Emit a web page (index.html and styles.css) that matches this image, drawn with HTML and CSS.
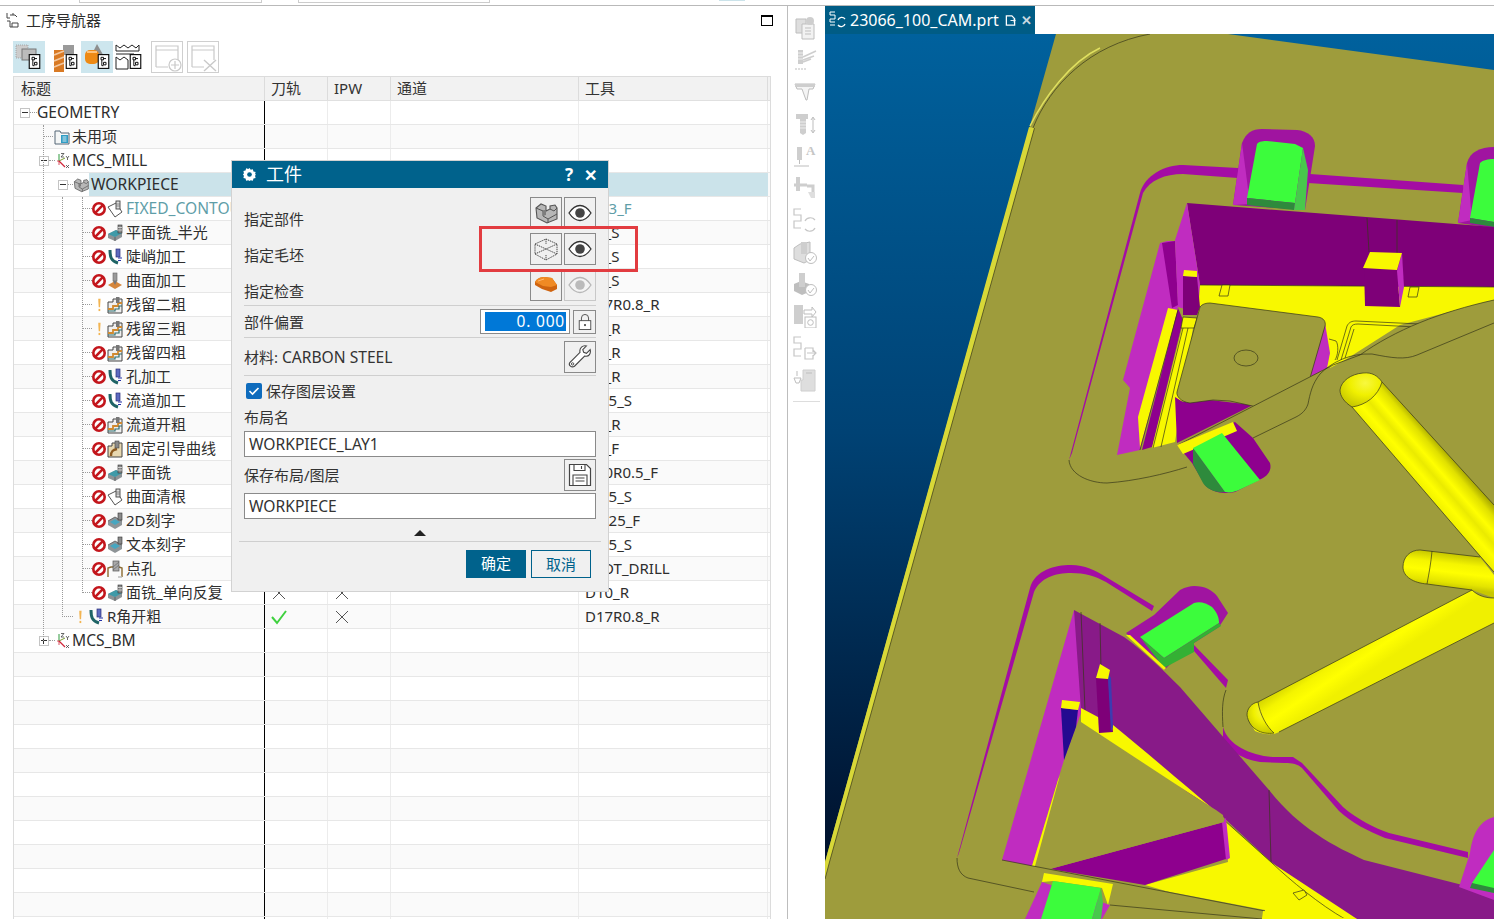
FILE: index.html
```html
<!DOCTYPE html>
<html lang="zh-CN">
<head>
<meta charset="utf-8">
<title>工序导航器</title>
<link rel="stylesheet" href="styles.css">
</head>
<body>
<svg class="defs" width="0" height="0" aria-hidden="true">
  <defs>
    <symbol id="no" viewBox="0 0 14 14"><circle cx="7" cy="7" r="5.7" fill="#fff" stroke="#c3161c" stroke-width="2.6"/><path d="M3.200 10.800 10.800 3.200" stroke="#c3161c" stroke-width="2.600"/></symbol>
    <symbol id="warn" viewBox="0 0 14 18"><path d="M6 1h3L8.400 12H6.600z" fill="#f2b451"/><rect x="6.400" y="14" width="2.200" height="2.800" fill="#f2b451"/></symbol>
    <symbol id="i-fixed" viewBox="0 0 16 18"><path d="M1 7 9 3l6 9-7 5z" fill="#fff" stroke="#555" stroke-width="1"/><rect x="9" y="1" width="4" height="8" fill="#ddd" stroke="#444" stroke-width=".9"/><path d="M9 4h4M9 6h4" stroke="#666" stroke-width=".7"/></symbol>
    <symbol id="i-face" viewBox="0 0 16 18"><path d="M1 10 9 6l6 3v4l-7 4-7-3z" fill="#8d9396"/><path d="M1 10 9 6l6 3-7 4z" fill="#3f9aa8"/><path d="M8 13v4" stroke="#555" stroke-width=".8"/><rect x="11" y="1" width="4" height="8" fill="#8a8a8a" stroke="#333" stroke-width=".6"/><path d="M11 3.500h4M11 6h4" stroke="#eee" stroke-width=".7"/></symbol>
    <symbol id="i-steep" viewBox="0 0 16 18"><path d="M3 2c0 7 1 11 8 13" fill="none" stroke="#1f6466" stroke-width="3"/><rect x="9" y="1" width="4" height="8" fill="#5d6bc0" stroke="#2b2f7a" stroke-width=".7"/><path d="M11 10h4M11 12.500h3" stroke="#2230a8" stroke-width="1.100"/></symbol>
    <symbol id="i-surf" viewBox="0 0 16 18"><rect x="6" y="1" width="4" height="8" fill="#9a9a9a" stroke="#666" stroke-width=".6"/><path d="M8 9 1 13l7 4 7-4z" fill="#d5863c"/><path d="M6 9h4l-2 4z" fill="#777"/></symbol>
    <symbol id="i-rest" viewBox="0 0 16 18"><path d="M1 6h5V3h9v14H1z" fill="#efefef" stroke="#444" stroke-width="1"/><path d="M1 13h5v-3h5V7h4" fill="none" stroke="#d08a30" stroke-width="1.800"/><path d="M1 15h7v-2h4v-3h3" fill="none" stroke="#2f6f70" stroke-width="1.200"/><rect x="9" y="1" width="3.500" height="6" fill="#777"/></symbol>
    <symbol id="i-guide" viewBox="0 0 16 18"><path d="M1 6h4V3h10v14H1z" fill="#e8d8b0" stroke="#444" stroke-width="1"/><path d="M4 16c0-5 2-6 6-7" fill="none" stroke="#8c5a20" stroke-width="2.400"/><rect x="8" y="1" width="4" height="7" fill="#8a8a8a" stroke="#444" stroke-width=".6"/></symbol>
    <symbol id="i-eng" viewBox="0 0 16 18"><path d="M1 9 8 5l7 4v4l-7 4-7-4z" fill="#8e9497"/><path d="M3 10 8 7.300l5 2.700-5 3z" fill="#46a6c0"/><path d="M1 9 8 5l7 4" fill="none" stroke="#555" stroke-width=".8"/><rect x="11" y="1" width="4" height="7" fill="#8a8a8a" stroke="#333" stroke-width=".6"/></symbol>
    <symbol id="i-drill" viewBox="0 0 16 18"><path d="M1 17V8l3-1h8l3 1v9" fill="none" stroke="#8a6a30" stroke-width="1.400"/><rect x="6" y="1" width="6" height="10" fill="#aaa" stroke="#555" stroke-width=".7"/><path d="M6 7l6-5M6 10l6-5" stroke="#666" stroke-width=".7"/><path d="M11 17h4" stroke="#bbb" stroke-width="1.500"/></symbol>
    <symbol id="i-mcs" viewBox="0 0 16 18"><path d="M3 9V2" stroke="#2f9a3c" stroke-width="1"/><path d="M3 9l6-3" stroke="#7a9a30" stroke-width="1"/><path d="M3 9l6 6" stroke="#d0263a" stroke-width="1.200"/><path d="M1 9l2 0 0 4" stroke="#d0263a" stroke-width=".8" fill="none"/><path d="M5 1.500h3L5 5h3M10 4l1.500 2 1.500-2M11.500 6v2M10 13l3 3M13 13l-3 3" fill="none" stroke="#444" stroke-width=".8"/></symbol>
    <symbol id="i-folder" viewBox="0 0 16 16"><path d="M1 2h5l1 2h8v11H1z" fill="#f4f6f6" stroke="#567" stroke-width="1"/><rect x="7" y="6" width="7" height="8" fill="#2f9cc4"/><path d="M8.500 8h4M8.500 10h4M8.500 12h4" stroke="#fff" stroke-width=".8"/></symbol>
    <symbol id="i-part" viewBox="0 0 24 24"><path d="M2 7 7 3l5 2v5l4-2V5l5-1 2 3v11l-10 4-10-5z" fill="#b7b7b7" stroke="#555" stroke-width="1.100"/><path d="M2 7l7 3v5l5 3v4M14 18l9-5M9 10l3 0M16 8l4 2 3-3" fill="none" stroke="#555" stroke-width="1"/><path d="M9 10l3-1v5l-3 1z" fill="#7d7d7d"/></symbol>
    <symbol id="i-eye" viewBox="0 0 24 24"><path d="M1 12C5 6 8.500 4.500 12 4.500S19 6 23 12c-4 6-7.500 7.500-11 7.500S5 18 1 12z" fill="#fff" stroke="#333" stroke-width="1.300"/><circle cx="12" cy="12" r="4.800" fill="#444"/></symbol>
    <symbol id="i-blank" viewBox="0 0 24 24"><path d="M12 2 23 7v10l-11 6L1 17V7zM1 7l11 5 11-5M1 17l11-5 11 5M12 2v5M12 18v5" fill="none" stroke="#444" stroke-width="1" stroke-dasharray="1.300 .8"/></symbol>
    <symbol id="i-check" viewBox="0 0 24 24"><path d="M1 9c2-4 6-5 10-5l7 1 5 7v4l-6 3-9-3-7-4z" fill="#cf6410"/><path d="M1 9l8 4 8 1 6-2-5-7-7-1C7 4 3 5 1 9z" fill="#f08a24"/><path d="M4 8l6-2" stroke="#ffb870" stroke-width="1"/></symbol>
    <symbol id="i-lock" viewBox="0 0 18 20"><rect x="2.500" y="8.500" width="13" height="10" fill="#fff" stroke="#444" stroke-width="1"/><path d="M5 8.500V5.500a4 4 0 0 1 8 0v3" fill="none" stroke="#444" stroke-width="1"/><circle cx="9" cy="13.500" r="1.200" fill="#444"/></symbol>
    <symbol id="i-wrench" viewBox="0 0 26 26"><path d="M24 5l-4 4-3-1-1-3 4-4c-4-1-8 2-7 7L2 19c-2 3 2 6 5 4L18 12c5 1 7-3 6-7z" fill="#fff" stroke="#444" stroke-width="1.200"/><circle cx="5" cy="20.500" r="1.300" fill="none" stroke="#444"/></symbol>
    <symbol id="i-save" viewBox="0 0 24 24"><path d="M1.500 1.500h17l4 4v17h-21z" fill="#fff" stroke="#444" stroke-width="1.200"/><path d="M6 1.500v6h11v-6M13.500 3v3M5 22.500V12h14v10.500M7.500 15h9M7.500 18h9" fill="none" stroke="#444" stroke-width="1.100"/></symbol>
    <symbol id="i-badge" viewBox="0 0 14 18"><rect x=".7" y=".7" width="12.600" height="16.600" fill="#fff" stroke="#111" stroke-width="1.400"/><path d="M4 4h3v3H4zM5 7v7h2M7 10h3v3H7zM7 5.500h3" fill="none" stroke="#111" stroke-width="1.200"/></symbol>
    <symbol id="gear" viewBox="0 0 16 16"><path d="M8 1l1.300 2 2.300-.6.600 2.300 2.300.6-.6 2.300L15 8l-1.100 1.400.6 2.300-2.300.6-.6 2.300-2.300-.6L8 15l-1.300-1-2.300.6-.6-2.300-2.300-.6.600-2.300L1 8l1.100-1.400-.6-2.300 2.300-.6.600-2.300 2.300.6z" fill="#fff"/><circle cx="8" cy="8" r="2.500" fill="#00628c"/></symbol>
    <symbol id="x-mark" viewBox="0 0 16 16"><path d="M2 2 14 14M14 2 2 14" stroke="#555" stroke-width="1"/></symbol>
  </defs>
</svg>

<div class="app">
  <div class="topstrip">
    <span class="topbox topbox-a"></span>
    <span class="topbox topbox-b"></span>
    <span class="topbox topbox-c"></span>
  </div>
  <div class="main">
    <section class="left">
      <header class="ptitle">
        <svg class="ptitle-ic" viewBox="0 0 16 16"><path d="M1 1v5h3M4 3h3M7 1v2h2M1 9h3M4 9v6h8v-4H6v4" fill="none" stroke="#444" stroke-width="1"/><path d="M9 3l2 2" stroke="#444"/></svg>
        <span class="ptitle-t">工序导航器</span>
        <span class="maxbtn"></span>
      </header>
      <div class="ptools">
        <span class="pt on"><svg viewBox="0 0 32 32"><rect x="3" y="4" width="12" height="13" fill="#ccc" stroke="#888" stroke-width=".6" stroke-dasharray="1 1"/><rect x="9" y="8" width="14" height="11" fill="#bbb" stroke="#777"/><use href="#i-badge" x="15" y="13" width="13" height="15"/></svg></span>
        <span class="pt"><svg viewBox="0 0 32 32"><rect x="14" y="4" width="11" height="10" fill="#9a9a9a"/><path d="M5 9h10v22H5z" fill="#d97a24"/><path d="M5 14l10-4M5 20l10-4M5 26l10-4" stroke="#f3c8a0" stroke-width="1.800"/><use href="#i-badge" x="16" y="13" width="13" height="15"/></svg></span>
        <span class="pt on"><svg viewBox="0 0 32 32"><path d="M16 3l9 16-5 6-8-14z" fill="#8e8e8e"/><rect x="4" y="9" width="14" height="14" rx="5" fill="#ee8a14"/><path d="M6 11h10" stroke="#ffc27a" stroke-width="2"/><use href="#i-badge" x="16" y="13" width="13" height="15"/></svg></span>
        <span class="pt"><svg viewBox="0 0 32 32"><path d="M3 4l4 3 4-3 4 3 4-3 4 3 3-3v6H3zM3 16l4 3 4-3 4 3v9H3z" fill="#fff" stroke="#222" stroke-width="1"/><path d="M3 13h18" stroke="#222"/><use href="#i-badge" x="16" y="13" width="13" height="15"/></svg></span>
        <span class="pt off"><svg viewBox="0 0 32 32"><path d="M4 25V4h22v14M4 25h12M4 8h22" fill="none" stroke="#c9c9c9" stroke-width="1.200"/><circle cx="23" cy="23" r="6" fill="#fff" stroke="#c9c9c9" stroke-width="1.200"/><path d="M23 19v8M19 23h8" stroke="#c9c9c9" stroke-width="1.200"/></svg></span>
        <span class="pt off"><svg viewBox="0 0 32 32"><path d="M4 25V4h22v14M4 25h12M4 8h22" fill="none" stroke="#c9c9c9" stroke-width="1.200"/><path d="M16 18l12 11M28 18 16 29" stroke="#c9c9c9" stroke-width="1.400"/></svg></span>
      </div>

      <div class="table">
        <div class="thead">
          <div class="th th-title">标题</div>
          <div class="th th-a">刀轨</div>
          <div class="th th-a">IPW</div>
          <div class="th th-b">通道</div>
          <div class="th th-c">工具</div>
        </div>
        <div class="rows">
          <span class="vl vl1"></span><span class="vl vl2"></span><span class="vl vl3"></span>

          <div class="row"><div class="t p0"><i class="exp minus"></i><b class="stub s7"></b><span class="lat">GEOMETRY</span></div><div class="c a"></div><div class="c a"></div><div class="c b"></div><div class="c d"></div></div>
          <div class="row"><div class="t p1"><b class="stub s9"></b><svg class="ic"><use href="#i-folder"/></svg><span class="gap2">未用项</span></div><div class="c a"></div><div class="c a"></div><div class="c b"></div><div class="c d"></div></div>
          <div class="row"><div class="t p2"><i class="exp minus"></i><b class="stub s6"></b><svg class="ic"><use href="#i-mcs"/></svg><span class="lat">MCS_MILL</span></div><div class="c a"></div><div class="c a"></div><div class="c b"></div><div class="c d"></div></div>
          <div class="row sel"><div class="t p3"><i class="exp minus"></i><b class="stub s5"></b><svg class="ic"><use href="#i-part"/></svg><span class="lab lat">WORKPIECE</span></div><div class="c a"></div><div class="c a"></div><div class="c b"></div><div class="c d"></div></div>

          <div class="row"><div class="t p4"><b class="stub s9"></b><svg class="st"><use href="#no"/></svg><svg class="ic"><use href="#i-fixed"/></svg><span class="gap3 teal lat">FIXED_CONTOUR</span></div><div class="c a"></div><div class="c a"></div><div class="c b"></div><div class="c d teal">D6.3_F</div></div>
          <div class="row"><div class="t p4"><b class="stub s9"></b><svg class="st"><use href="#no"/></svg><svg class="ic"><use href="#i-face"/></svg><span class="gap3">平面铣_半光</span></div><div class="c a"></div><div class="c a"></div><div class="c b"></div><div class="c d">D8_S</div></div>
          <div class="row"><div class="t p4"><b class="stub s9"></b><svg class="st"><use href="#no"/></svg><svg class="ic"><use href="#i-steep"/></svg><span class="gap3">陡峭加工</span></div><div class="c a"></div><div class="c a"></div><div class="c b"></div><div class="c d">D8_S</div></div>
          <div class="row"><div class="t p4"><b class="stub s9"></b><svg class="st"><use href="#no"/></svg><svg class="ic"><use href="#i-surf"/></svg><span class="gap3">曲面加工</span></div><div class="c a"></div><div class="c a"></div><div class="c b"></div><div class="c d">D8_S</div></div>
          <div class="row"><div class="t p4"><b class="stub s9"></b><svg class="st"><use href="#warn"/></svg><svg class="ic"><use href="#i-rest"/></svg><span class="gap3">残留二粗</span></div><div class="c a"></div><div class="c a"></div><div class="c b"></div><div class="c d">D17R0.8_R</div></div>
          <div class="row"><div class="t p4"><b class="stub s9"></b><svg class="st"><use href="#warn"/></svg><svg class="ic"><use href="#i-rest"/></svg><span class="gap3">残留三粗</span></div><div class="c a"></div><div class="c a"></div><div class="c b"></div><div class="c d">D8_R</div></div>
          <div class="row"><div class="t p4"><b class="stub s9"></b><svg class="st"><use href="#no"/></svg><svg class="ic"><use href="#i-rest"/></svg><span class="gap3">残留四粗</span></div><div class="c a"></div><div class="c a"></div><div class="c b"></div><div class="c d">D8_R</div></div>
          <div class="row"><div class="t p4"><b class="stub s9"></b><svg class="st"><use href="#no"/></svg><svg class="ic"><use href="#i-steep"/></svg><span class="gap3">孔加工</span></div><div class="c a"></div><div class="c a"></div><div class="c b"></div><div class="c d">D8_R</div></div>
          <div class="row"><div class="t p4"><b class="stub s9"></b><svg class="st"><use href="#no"/></svg><svg class="ic"><use href="#i-steep"/></svg><span class="gap3">流道加工</span></div><div class="c a"></div><div class="c a"></div><div class="c b"></div><div class="c d">D2.5_S</div></div>
          <div class="row"><div class="t p4"><b class="stub s9"></b><svg class="st"><use href="#no"/></svg><svg class="ic"><use href="#i-rest"/></svg><span class="gap3">流道开粗</span></div><div class="c a"></div><div class="c a"></div><div class="c b"></div><div class="c d">D8_R</div></div>
          <div class="row"><div class="t p4"><b class="stub s9"></b><svg class="st"><use href="#no"/></svg><svg class="ic"><use href="#i-guide"/></svg><span class="gap3">固定引导曲线</span></div><div class="c a"></div><div class="c a"></div><div class="c b"></div><div class="c d">D8_F</div></div>
          <div class="row"><div class="t p4"><b class="stub s9"></b><svg class="st"><use href="#no"/></svg><svg class="ic"><use href="#i-face"/></svg><span class="gap3">平面铣</span></div><div class="c a"></div><div class="c a"></div><div class="c b"></div><div class="c d">D10R0.5_F</div></div>
          <div class="row"><div class="t p4"><b class="stub s9"></b><svg class="st"><use href="#no"/></svg><svg class="ic"><use href="#i-fixed"/></svg><span class="gap3">曲面清根</span></div><div class="c a"></div><div class="c a"></div><div class="c b"></div><div class="c d">D2.5_S</div></div>
          <div class="row"><div class="t p4"><b class="stub s9"></b><svg class="st"><use href="#no"/></svg><svg class="ic"><use href="#i-eng"/></svg><span class="gap3">2D刻字</span></div><div class="c a"></div><div class="c a"></div><div class="c b"></div><div class="c d">D1.25_F</div></div>
          <div class="row"><div class="t p4"><b class="stub s9"></b><svg class="st"><use href="#no"/></svg><svg class="ic"><use href="#i-eng"/></svg><span class="gap3">文本刻字</span></div><div class="c a"></div><div class="c a"></div><div class="c b"></div><div class="c d">D0.5_S</div></div>
          <div class="row"><div class="t p4"><b class="stub s9"></b><svg class="st"><use href="#no"/></svg><svg class="ic"><use href="#i-drill"/></svg><span class="gap3">点孔</span></div><div class="c a"></div><div class="c a"></div><div class="c b"></div><div class="c d">SPOT_DRILL</div></div>
          <div class="row"><div class="t p4"><b class="stub s9"></b><svg class="st"><use href="#no"/></svg><svg class="ic"><use href="#i-face"/></svg><span class="gap3">面铣_单向反复</span></div><div class="c a"><svg class="mark"><use href="#x-mark"/></svg></div><div class="c a"><svg class="mark"><use href="#x-mark"/></svg></div><div class="c b"></div><div class="c d">D10_R</div></div>
          <div class="row"><div class="t p5"><b class="stub s9"></b><svg class="st"><use href="#warn"/></svg><svg class="ic"><use href="#i-steep"/></svg><span class="gap3">R角开粗</span></div><div class="c a"><svg class="mark" viewBox="0 0 16 16"><path d="M1 8l5 6L15 2" fill="none" stroke="#3fd13f" stroke-width="2"/></svg></div><div class="c a"><svg class="mark"><use href="#x-mark"/></svg></div><div class="c b"></div><div class="c d">D17R0.8_R</div></div>
          <div class="row"><div class="t p2"><i class="exp plus"></i><b class="stub s6"></b><svg class="ic"><use href="#i-mcs"/></svg><span class="lat">MCS_BM</span></div><div class="c a"></div><div class="c a"></div><div class="c b"></div><div class="c d"></div></div>

          <div class="row"><div class="t"></div><div class="c a"></div><div class="c a"></div><div class="c b"></div><div class="c d"></div></div>
          <div class="row"><div class="t"></div><div class="c a"></div><div class="c a"></div><div class="c b"></div><div class="c d"></div></div>
          <div class="row"><div class="t"></div><div class="c a"></div><div class="c a"></div><div class="c b"></div><div class="c d"></div></div>
          <div class="row"><div class="t"></div><div class="c a"></div><div class="c a"></div><div class="c b"></div><div class="c d"></div></div>
          <div class="row"><div class="t"></div><div class="c a"></div><div class="c a"></div><div class="c b"></div><div class="c d"></div></div>
          <div class="row"><div class="t"></div><div class="c a"></div><div class="c a"></div><div class="c b"></div><div class="c d"></div></div>
          <div class="row"><div class="t"></div><div class="c a"></div><div class="c a"></div><div class="c b"></div><div class="c d"></div></div>
          <div class="row"><div class="t"></div><div class="c a"></div><div class="c a"></div><div class="c b"></div><div class="c d"></div></div>
          <div class="row"><div class="t"></div><div class="c a"></div><div class="c a"></div><div class="c b"></div><div class="c d"></div></div>
          <div class="row"><div class="t"></div><div class="c a"></div><div class="c a"></div><div class="c b"></div><div class="c d"></div></div>
          <div class="row"><div class="t"></div><div class="c a"></div><div class="c a"></div><div class="c b"></div><div class="c d"></div></div>
          <div class="row"><div class="t"></div><div class="c a"></div><div class="c a"></div><div class="c b"></div><div class="c d"></div></div>
        </div>
      </div>
    </section>

    <aside class="rtool">
      <svg class="ri" viewBox="0 0 24 24"><path d="M3 3h10v14H3z" fill="#ddd" stroke="#bbb"/><path d="M9 8h12v15H9z" fill="#f2f2f2" stroke="#bbb"/><path d="M12 12h6M12 15h6M12 18h6" stroke="#bbb"/><circle cx="17" cy="5" r="4" fill="#ccc"/></svg>
      <svg class="ri" viewBox="0 0 24 24"><rect x="5" y="2" width="5" height="14" fill="#ccc"/><path d="M5 5h5M5 8h5M5 11h5" stroke="#eee"/><path d="M10 9 23 3M10 12l11-4M10 14l8-3" stroke="#ccc" stroke-width="1.500"/><path d="M2 21h12" stroke="#ddd" stroke-width="2" stroke-dasharray="2 1"/></svg>
      <svg class="ri" viewBox="0 0 24 24"><path d="M2 4h20l-2 5h-4l-2 11h-1L9 9H4z" fill="#f4f4f4" stroke="#bbb"/><path d="M2 4h20v3H2z" fill="#ccc"/></svg>
      <svg class="ri" viewBox="0 0 24 24"><path d="M3 2h12v5h-2v14l-3 2-3-2V7H3z" fill="#ccc"/><path d="M7 10h6M7 13h6M7 16h6" stroke="#eee"/><path d="M20 6v14M18 8l2-3 2 3M18 18l2 3 2-3" fill="none" stroke="#bbb"/></svg>
      <svg class="ri" viewBox="0 0 24 24"><rect x="4" y="3" width="5" height="13" fill="#ccc"/><path d="M6.500 16v4" stroke="#bbb"/><path d="M1 21h15v2H1z" fill="#ddd"/><text class="rt" x="13" y="11">A</text></svg>
      <svg class="ri" viewBox="0 0 24 24"><rect x="3" y="1" width="4" height="14" fill="#ccc"/><path d="M1 9h13M14 10h6v12" fill="none" stroke="#ccc" stroke-width="3"/><path d="M15 16h7v6h-4" fill="#ddd"/></svg>
      <svg class="ri" viewBox="0 0 24 24"><path d="M8 1H1v6h7v6H1v7h7" fill="none" stroke="#c4c4c4" stroke-width="1.200"/><path d="M12 13a6 6 0 0 1 10-1M22 20a6 6 0 0 1-10 1" fill="none" stroke="#c4c4c4" stroke-width="1.200"/></svg>
      <svg class="ri" viewBox="0 0 24 24"><path d="M1 8l6-4 10-2v18l-6 3-10-4z" fill="#ddd" stroke="#bbb"/><rect x="8" y="2" width="6" height="12" fill="#ccc"/><circle cx="18" cy="18" r="5.500" fill="#fff" stroke="#bbb"/><path d="M15 18l2 3 4-5" fill="none" stroke="#bbb"/></svg>
      <svg class="ri" viewBox="0 0 24 24"><path d="M1 12l7-3 8 3v8l-7 3-8-4z" fill="#bbb"/><rect x="6" y="1" width="6" height="14" fill="#ccc"/><circle cx="18" cy="18" r="5.500" fill="#fff" stroke="#bbb"/><path d="M15 18l2 3 4-5" fill="none" stroke="#bbb"/></svg>
      <svg class="ri" viewBox="0 0 24 24"><rect x="1" y="1" width="9" height="19" fill="#ccc"/><path d="M11 6h8V3l4 5-4 5v-3h-8z" fill="#fff" stroke="#bbb"/><rect x="12" y="13" width="11" height="11" fill="#fff" stroke="#bbb"/><circle cx="17.500" cy="18.500" r="2.800" fill="none" stroke="#bbb"/></svg>
      <svg class="ri" viewBox="0 0 24 24"><path d="M8 1H1v6h7v6H1v7h7" fill="none" stroke="#c4c4c4" stroke-width="1.200"/><path d="M12 12v11h8v-4M12 12h8v4M14 17h9M20 14l3 3-3 3" fill="none" stroke="#c4c4c4" stroke-width="1.200"/></svg>
      <svg class="ri" viewBox="0 0 24 24"><path d="M10 2h12v21H8V12h2z" fill="#ddd" stroke="#ccc"/><path d="M1 10h7l-2 5H3z" fill="#fff" stroke="#bbb"/><path d="M13 5h6M4 3v5" stroke="#bbb"/></svg>
      <span class="rsep"></span>
    </aside>

    <section class="view">
      <div class="tabbar">
        <div class="tab">
          <svg class="tab-ic" viewBox="0 0 18 18"><path d="M6 1H1v3h5v4H1v3h5M1 14h5" fill="none" stroke="#fff" stroke-width="1"/><path d="M9 9a4 4 0 0 1 7-1M16 13a4 4 0 0 1-7 1" fill="none" stroke="#fff" stroke-width="1.300"/></svg>
          <span class="tab-t">23066_100_CAM.prt</span>
          <svg class="tab-d" viewBox="0 0 12 12"><path d="M1.500 1h6l3 3v7h-9z" fill="none" stroke="#fff" stroke-width="1.400"/><path d="M6 6h5M9 4l2 2-2 2" fill="none" stroke="#fff"/></svg>
          <span class="tab-x">✕</span>
        </div>
      </div>
      <svg class="scene" viewBox="825 34 669 885" preserveAspectRatio="none">
        <defs>
          <linearGradient id="sky" x1="0" y1="0" x2="0" y2="1"><stop offset="0" stop-color="#00619d"/><stop offset=".45" stop-color="#004274"/><stop offset="1" stop-color="#000a22"/></linearGradient>
          <linearGradient id="tb1" gradientUnits="userSpaceOnUse" x1="1384" y1="380" x2="1352" y2="408"><stop offset="0" stop-color="#a9a900"/><stop offset=".18" stop-color="#e0e000"/><stop offset=".42" stop-color="#ffff00"/><stop offset=".6" stop-color="#eaea00"/><stop offset=".8" stop-color="#ffff00"/><stop offset="1" stop-color="#f2f200"/></linearGradient>
          <linearGradient id="tb2" gradientUnits="userSpaceOnUse" x1="1440" y1="552" x2="1436" y2="586"><stop offset="0" stop-color="#c6c600"/><stop offset=".3" stop-color="#f5f500"/><stop offset=".55" stop-color="#ffff00"/><stop offset=".85" stop-color="#e4e400"/><stop offset="1" stop-color="#c8c800"/></linearGradient>
          <linearGradient id="tb3" gradientUnits="userSpaceOnUse" x1="1258" y1="702" x2="1279" y2="733"><stop offset="0" stop-color="#d4d400"/><stop offset=".3" stop-color="#f4f400"/><stop offset=".6" stop-color="#ffff00"/><stop offset="1" stop-color="#f0f000"/></linearGradient>
          <radialGradient id="cap" cx=".6" cy=".3" r=".7"><stop offset="0" stop-color="#f8f840"/><stop offset=".5" stop-color="#f0f000"/><stop offset="1" stop-color="#caca00"/></radialGradient>
        </defs>
        <rect class="sky" x="825" y="34" width="669" height="885"/>
        <!-- plate -->
        <path class="olive" d="M1056 34 1030 126 825 862V919H1494V70L1228 34Z"/>
        <path class="edge-y" d="M1029 127 1034.500 128 829.500 862 825 879V862Z"/>
        <path class="ln" d="M1034.500 128 829.500 862 825 879"/>
        <path class="ln" d="M1033 128C1050 85 1090 45 1150 34"/>
        <path class="arc-y" d="M1030 126C1044 98 1070 62 1100 48"/>

        <!-- upper ring groove -->
        <path class="gr" d="M1069 460 1140 193C1145 175 1165 165 1183 165L1238 168V178L1183 174C1165 174 1150 180 1143 193L1072 453Z"/>
        <path class="gr" d="M1310 174 1463 185V193L1308 183Z"/>
        <path class="ln" d="M1069 460C1070 475 1090 483 1107 483C1135 481 1165 474 1187 467"/>

        <!-- upper green pocket -->
        <path class="mg-d" d="M1233 205 1242 143C1246 133 1252 129 1262 129L1297 130C1308 131 1315 137 1315 146L1305 210Z"/>
        <path class="mg-l" d="M1233 205 1242 143 1250 204Z"/>
        <path class="gn" d="M1247 198 1257 144C1259 141 1264 141 1267 141L1295 144 1303 148 1295 203Z"/>
        <path class="gn-d" d="M1247 198 1295 203 1294 210 1247 205Z"/>
        <path class="gn-m" d="M1303 148 1308 170 1305 210 1294 210 1295 203Z"/>

        <!-- right green pocket -->
        <path class="mg-d" d="M1458 223 1467 163C1470 152 1480 147 1494 147V228Z"/>
        <path class="mg-l" d="M1458 223 1467 163 1472 220Z"/>
        <path class="gn" d="M1470 218 1480 163C1483 160 1488 159 1494 159V222Z"/>
        <path class="gn-d" d="M1470 218 1494 222V227L1470 223Z"/>

        <!-- main pocket -->
        <path class="mg-l" d="M1160 243 1167 241 1175 241 1178 307 1140 450 1117 455 1130 388 1123 380Z"/>
        <path class="mg-m" d="M1162 243 1175 241 1178 305 1172 308Z"/>
        <path class="ye" d="M1168 308 1178 310 1140 448 1138 417Z"/>
        <path class="mg-m" d="M1178 308 1183 320 1152 447 1142 450Z"/>
        <path class="ye" d="M1182 328 1193 328 1175 442 1152 448Z"/>
        <path class="mg-m" d="M1175 397 1183 402 1210 400 1253 405 1177 443Z"/>
        <path class="ln" d="M1178 310 1140 450M1183 328 1153 448M1188 328 1161 447"/>
        <path class="pu" d="M1187 203 1494 227V287L1200 285Z"/>
        <path class="mg-l" d="M1175 240 1187 203 1200 285 1198 313 1178 307Z"/>
        <path class="ye" d="M1200 285 1494 287V300L1400 325 1345 360 1330 368 1300 362 1198 313Z"/>
        <path class="ln" d="M1200 285 1494 287"/>
        <path class="ln" d="M1367 218 1369 252M1397 220 1397 254"/>
        <path class="ye ln" d="M1222 285 1230 285 1228 296 1219 296Z"/>
        <path class="ye ln" d="M1410 287 1419 287 1417 297 1408 297Z"/>
        <path class="pu" d="M1364 269 1397 271 1400 307 1365 306Z"/>
        <path class="mg-l" d="M1397 271 1402 253 1404 287 1400 307Z"/>
        <path class="ye" d="M1370 252 1402 253 1397 270 1363 268Z"/>
        <path class="pu" d="M1183 276 1197 277 1200 307 1197 315 1183 315Z"/>
        <path class="ye" d="M1184 270 1197 271 1197 277 1183 276Z"/>
        <path class="ye ln" d="M1183 317 1197 318 1194 328 1181 328Z"/>

        <!-- island -->
        <path class="mg-l" d="M1325 323 1330 353 1327 368 1305 380Z"/>
        <path class="olive ln" d="M1210 303 1318 317C1324 318 1326 322 1325 326L1310 378 1257 407 1230 401 1213 400 1190 403C1181 402 1176 396 1177 392L1200 307C1202 304 1206 303 1210 303Z"/>
        <ellipse class="ln" cx="1246" cy="358" rx="12" ry="8"/>
        <path class="ln" d="M1337 360 1347 326C1349 322 1352 321 1356 321L1420 324M1341 360 1351 327C1352 325 1354 324 1358 324L1416 327M1345 358 1354 329"/>
        <path class="ln" d="M1329 339 1336 341C1339 345 1338 356 1335 360"/>

        <!-- ridge overlay -->
        <path class="olive" d="M1494 300C1440 312 1395 330 1360 355L1333 365 1180 443 1210 470 1253 438 1308 407C1312 398 1310 392 1313 383L1333 365 1372 354 1403 358 1417 355 1494 323Z"/>
        <path class="ln" d="M1494 300C1440 312 1395 330 1360 355L1333 365 1178 445"/>
        <path class="ln" d="M1494 323 1417 355C1405 360 1392 358 1372 354C1350 353 1332 362 1320 374C1312 384 1310 394 1308 404C1306 410 1302 414 1296 417L1253 438"/>

        <!-- bottom of upper pocket green -->
        <path class="mg-m" d="M1177 445 1235 422 1253 438 1270 463C1272 470 1268 475 1263 478L1235 492C1222 495 1210 491 1205 485L1192 463Z"/>
        <path class="ye" d="M1177 445 1233 422 1237 431 1183 454Z"/>
        <path class="gn-d" d="M1193 448 1225 492C1215 493 1207 489 1203 483L1193 464Z"/>
        <path class="gn" d="M1193 448 1222 433 1260 480 1241 489C1235 492 1230 493 1225 492Z"/>

        <!-- tubes -->
        <path fill="url(#tb2)" d="M1420 550 1480 557 1494 575V598L1472 590 1427 584C1414 583 1403 577 1403 567 1403 557 1410 550 1420 550Z"/>
        <path fill="url(#tb3)" d="M1472 590C1478 596 1486 598 1494 598V623L1279 732C1272 736 1262 734 1255 731L1247 717 1258 702Z"/>
        <path class="ln" d="M1258 702 1472 590M1279 732 1494 623M1472 590C1478 596 1486 598 1494 598"/>
        <path fill="url(#cap)" class="st-only" d="M1247 715C1247 708 1252 703 1258 702 1260 715 1267 727 1274 733 1262 735 1249 729 1247 715Z"/>
        <path fill="url(#tb1)" d="M1382 382 1494 505V572L1352 407Z"/>
        <path fill="url(#cap)" class="st-only" d="M1363 373C1372 372 1378 376 1382 382 1378 396 1366 405 1352 407 1344 402 1340 396 1340 390 1341 381 1351 374 1363 373Z"/>
        <path class="ln" d="M1382 382 1494 505M1352 407 1480 556 1494 572"/>
        <path class="ln" d="M1420 550 1480 557M1432 551C1431 563 1429 573 1427 584L1472 590M1420 550C1410 550 1403 557 1403 567 1403 577 1414 583 1427 584"/>

        <!-- lower ring groove -->
        <path class="gr" d="M957 858 1030 588C1035 570 1055 565 1071 565 1085 565 1095 570 1106 577L1154 606 1152 611 1106 582C1095 576 1085 573 1071 573 1055 573 1040 578 1034 592L959 853Z"/>
        <path class="ln" d="M957 858C957 868 960 875 968 878L1034 892"/>
        <path class="gr" d="M1194 645 1228 680 1226 688 1194 651Z"/>
        <path class="gr" d="M1223 727C1228 745 1250 755 1272 757L1293 757 1302 763 1343 807C1358 820 1375 828 1389 833L1468 852V858L1385 838C1368 831 1352 823 1339 811L1302 768C1298 764 1292 763 1285 763L1260 762C1240 759 1226 748 1223 737Z"/>
        <path class="ln" d="M1226 690C1222 700 1222 712 1223 727"/>

        <!-- lower pocket -->
        <path class="mg-l" d="M1074 610 1002 860 1032 866 1064 760 1081 713 1086 625Z"/>
        <path class="pu2" d="M1074 610 1124 637C1145 652 1165 672 1180 687L1269 790C1285 810 1300 823 1315 833 1335 847 1350 853 1364 860L1494 893V919H1357C1335 910 1320 900 1304 890L1269 860 1223 817 1166 777 1099 733 1081 710Z"/>
        <path class="ln" d="M1081 612 1085 710M1100 623 1101 668M1269 790 1271 862"/>
        <path class="ye" d="M1081 708 1113 725C1150 755 1190 790 1223 817L1212 808 1081 722Z"/>
        <path class="ye" d="M1224 820 1272 863 1357 919H1262L1145 885 1228 862Z"/>
        <path class="ln" d="M1224 820 1272 863C1290 880 1320 905 1345 919"/>
        <path class="mg-m" d="M1050 869 1224 822 1229 858 1145 885Z"/>
        <path class="mg-l" d="M1222 822 1226 818 1230 858 1226 860Z"/>
        <path class="olive" d="M1081 727 1216 810 1223 815 1224 822 1050 869 1035 866 1064 763 1076 727Z"/>
        <path class="ye" d="M1032 866 1035 866 1060 775 1058 780Z"/>
        <path class="olive" d="M1106 905 1034 866 1265 910 1262 919H1030Z"/>
        <path class="ln" d="M1002 860 1265 911"/>
        <path class="bl" d="M1061 708 1078 710 1076 727 1064 760Z"/>
        <path class="ye" d="M1062 700 1080 702 1078 710 1061 708Z"/>
        <path class="pu" d="M1096 678 1108 679 1113 732 1099 733Z"/>
        <path class="bl2" d="M1108 673 1111 678 1113 727 1111 732 1108 679Z"/>
        <path class="ye" d="M1100 664 1110 670 1108 679 1096 678Z"/>
        <path class="ye ln" d="M1293 893 1304 890 1307 895 1299 900Z"/>

        <!-- lower-mid green pocket -->
        <path class="mg-d" d="M1126 633 1154 615 1180 590C1186 587 1190 586 1194 586 1205 586 1212 590 1217 596L1228 613 1219 627 1194 643 1164 670Z"/>
        <path class="gn" d="M1140 637 1194 603C1200 601 1206 603 1212 607 1217 612 1219 618 1219 623L1164 658Z"/>
        <path class="gn-s" d="M1140 637 1164 658 1219 623 1221 626 1194 643V652L1164 668Z"/>
        <path class="ye" d="M1126 635 1130 635 1166 668 1164 670Z"/>

        <!-- bottom green pockets -->
        <path class="mg-l" d="M1025 919 1042 882 1110 905 1102 919Z"/>
        <path class="ye" d="M1044 873 1113 884 1108 905 1102 888 1053 881 1042 882Z"/>
        <path class="gn" d="M1053 881 1101 888 1092 919H1041Z"/>
        <path class="gn-m" d="M1101 888 1103 903 1101 919H1092Z"/>
        <path class="ln" d="M1110 905 1262 919"/>
        <path class="ye" d="M1263 911 1357 919H1262Z"/>
        <path class="mg-l" d="M1459 887 1470 853C1473 830 1482 820 1494 817V900Z"/>
        <path class="gn" d="M1472 883 1494 850V893Z"/>
        <path class="gn-d" d="M1472 883 1494 888V893L1470 888Z"/>
      </svg>
    </section>
  </div>

  <div class="dialog">
    <div class="dh">
      <svg class="dh-ic"><use href="#gear"/></svg>
      <span class="dh-t">工件</span>
      <span class="dh-q">?</span>
      <span class="dh-x">✕</span>
    </div>
    <div class="db">
      <div class="drow"><label class="dl low">指定部件</label><span class="btn"><svg><use href="#i-part"/></svg></span><span class="btn"><svg><use href="#i-eye"/></svg></span></div>
      <div class="drow"><label class="dl low">指定毛坯</label><span class="btn"><svg><use href="#i-blank"/></svg></span><span class="btn"><svg><use href="#i-eye"/></svg></span></div>
      <div class="drow"><label class="dl low">指定检查</label><span class="btn"><svg><use href="#i-check"/></svg></span><span class="btn dis"><svg><use href="#i-eye"/></svg></span></div>
      <hr class="dsep first">
      <div class="drow offs"><label class="dl">部件偏置</label><span class="num"><span class="numv">0. 000</span></span><span class="lock"><svg><use href="#i-lock"/></svg></span></div>
      <hr class="dsep">
      <div class="drow mat"><label class="dl">材料: <span class="lat">CARBON STEEL</span></label><span class="btn"><svg><use href="#i-wrench"/></svg></span></div>
      <hr class="dsep tight">
      <div class="chk"><span class="box"><svg viewBox="0 0 16 16"><path d="M3.500 8l3 3 6-6" fill="none" stroke="#fff" stroke-width="1.600"/></svg></span><span class="dl">保存图层设置</span></div>
      <div class="dl lblrow">布局名</div>
      <div class="inp">WORKPIECE_LAY1</div>
      <div class="drow sv"><label class="dl">保存布局/图层</label><span class="btn"><svg><use href="#i-save"/></svg></span></div>
      <div class="inp second">WORKPIECE</div>
      <div class="tri"></div>
      <hr class="dsep wide">
      <div class="acts"><span class="ok">确定</span><span class="cancel">取消</span></div>
    </div>
  </div>

  <div class="redbox"></div>
</div>
</body>
</html>
```
FILE: styles.css
```css
* { box-sizing: border-box; }
html, body { margin: 0; padding: 0; background: #fff; }
body { font-family: "Noto Sans", "Noto Sans CJK SC", sans-serif; font-size: 15px; color: #2e2e2e; }
.defs { position: absolute; }
.lat { font-size: 15.6px; }

.app { position: relative; width: 1494px; height: 919px; overflow: hidden; display: flex; flex-direction: column; }

.topstrip { height: 6px; flex: none; border-bottom: 1px solid #b9b9b9; display: flex; padding-left: 79px; }
.topbox { height: 3px; border: 1px solid #ccc; border-top: 0; display: block; }
.topbox-a { width: 183px; }
.topbox-b { width: 192px; margin-left: 36px; }
.topbox-c { width: 26px; margin-left: 229px; background: #cbe3ea; border: 0; height: 1px; }

.main { flex: 1; display: flex; min-height: 0; }

.left { width: 788px; flex: none; border-right: 1px solid #bdbdbd; padding-left: 13px; display: flex; flex-direction: column; min-height: 0; }
.ptitle { height: 28px; flex: none; display: flex; align-items: center; margin-left: -7px; padding-right: 14px; }
.ptitle-ic { width: 16px; height: 16px; }
.ptitle-t { margin-left: 4px; line-height: 28px; }
.maxbtn { margin-left: auto; width: 12px; height: 11px; border: 1px solid #000; border-top-width: 2px; }

.ptools { height: 32px; flex: none; margin-top: 7px; display: flex; }
.pt { width: 32px; height: 32px; display: block; }
.pt svg { width: 32px; height: 32px; display: block; }
.pt.on { background: #cde6ee; }
.pt.off { border: 1px solid #cfcfcf; }
.pt.off:nth-child(5) { margin-left: 6px; }
.pt.off:nth-child(6) { margin-left: 4px; }
.pt:nth-child(2) { margin-left: 4px; }

.table { margin-top: 3px; width: 758px; flex: 1; min-height: 0; border: 1px solid #dcdcdc; border-bottom: 0; overflow: hidden; }
.thead { display: grid; grid-template-columns: 251px 63px 63px 188px 189px; height: 24px; background: #f2f2f2; border-bottom: 1px solid #e0e0e0; }
.th { line-height: 23px; padding-left: 6px; border-right: 1px solid #dcdcdc; font-size: 15px; color: #333; }
.th-title { padding-left: 7px; }

.rows { position: relative; }
.row { display: grid; grid-template-columns: 251px 63px 63px 188px 189px; height: 24px; border-bottom: 1px solid #e7e7e7; background: #fff; }
.row:nth-of-type(even) { background: #fafafa; }
.t { border-right: 1px solid #000; display: flex; align-items: center; white-space: nowrap; overflow: hidden; line-height: 23px; position: relative; z-index: 1; }
.c { border-right: 1px solid #ececec; line-height: 23px; padding-left: 6px; white-space: nowrap; overflow: hidden; display: flex; align-items: center; }
.p0 { padding-left: 6px; }
.p1 { padding-left: 30px; }
.p2 { padding-left: 25px; }
.p3 { padding-left: 44px; }
.p4 { padding-left: 69px; }
.p5 { padding-left: 50px; }

.exp { width: 10px; height: 10px; border: 1px solid #c4c4c4; background: #fff; flex: none; position: relative; display: block; }
.exp::before { content: ""; position: absolute; left: 1px; right: 1px; top: 3px; height: 1px; background: #333; }
.plus::after { content: ""; position: absolute; top: 1px; bottom: 1px; left: 3px; width: 1px; background: #333; }
.stub { flex: none; height: 0; border-top: 1px dotted #9a9a9a; display: block; }
.s5 { width: 5px; }
.s6 { width: 6px; }
.s7 { width: 7px; }
.s9 { width: 9px; }
.st { width: 14px; height: 14px; flex: none; }
.ic { width: 16px; height: 18px; flex: none; margin-left: 1px; }
.gap2 { margin-left: 2px; }
.gap3 { margin-left: 3px; }
.teal { color: #5f9ea8; }

.sel .c { background: #cbe3ea; border-right-color: #cbe3ea; }
.sel .t { background: #fff; }
.lab { align-self: stretch; flex: 1; background: #cbe3ea; padding-left: 2px; }
.sel .ic { margin-left: 0; }

.mark { width: 16px; height: 16px; flex: none; }
.vl { position: absolute; width: 0; border-left: 1px dotted #9a9a9a; z-index: 2; }
.vl1 { left: 29px; top: 24px; height: 516px; }
.vl2 { left: 48px; top: 96px; height: 420px; }
.vl3 { left: 68px; top: 96px; height: 396px; }

.rtool { width: 37px; flex: none; padding: 10px 0 0 5px; display: flex; flex-direction: column; gap: 8px; }
.ri { width: 24px; height: 24px; flex: none; opacity: .95; }
.rt { font-family: "Liberation Serif", serif; font-weight: 700; font-size: 13px; fill: #c4c4c4; }
.rsep { width: 27px; height: 1px; background: #ddd; margin-top: 1px; }

.view { flex: 1; display: flex; flex-direction: column; min-width: 0; }
.tabbar { height: 28px; flex: none; }
.tab { width: 210px; height: 28px; background: #005c85; color: #fff; display: flex; align-items: center; padding-left: 4px; }
.tab-ic { width: 18px; height: 18px; flex: none; }
.tab-t { margin-left: 3px; font-size: 16px; white-space: nowrap; line-height: 28px; }
.tab-d { width: 11px; height: 11px; margin-left: 6px; flex: none; }
.tab-x { margin-left: 5px; font-size: 13px; color: #c8d8e0; font-weight: 700; }
.scene { display: block; flex: 1; width: 669px; height: 885px; }

.sky { fill: url(#sky); }
.olive { fill: #9e9c3c; }
.edge-y { fill: #d8d838; }
.arc-y { fill: none; stroke: #e0e060; stroke-width: 1.5; }
.ln { fill: none; stroke: #37371a; stroke-width: .7; }
.st-only { stroke: #37371a; stroke-width: .7; }
.olive.ln { fill: #9e9c3c; }
.ye.ln { fill: #f6f600; }
.gr { fill: #a40ca4; }
.mg-d { fill: #a014a0; }
.mg-l { fill: #c02cc0; }
.mg-m { fill: #8e008e; }
.pu { fill: #7e0078; }
.pu2 { fill: #881a88; }
.ye { fill: #f8f800; }
.gn { fill: #3cfc3c; }
.gn-d { fill: #2e8a3c; }
.gn-m { fill: #48c84c; }
.gn-s { fill: #34b034; }
.bl { fill: #240a90; }
.bl2 { fill: #3c3cb0; }

.dialog { position: absolute; left: 232px; top: 161px; width: 376px; height: 430px; background: #f0f0f0; box-shadow: 0 0 0 1px #d2d2d2; z-index: 5; display: flex; flex-direction: column; }
.dh { height: 27px; flex: none; background: #00628c; color: #fff; display: flex; align-items: center; padding: 0 11px 0 10px; }
.dh-ic { width: 15px; height: 15px; flex: none; }
.dh-t { margin-left: 9px; font-size: 18px; line-height: 27px; }
.dh-q { margin-left: auto; font-weight: 700; font-size: 17px; }
.dh-x { margin-left: 11px; font-weight: 700; font-size: 16px; }
.db { padding: 9px 12px 0; display: flex; flex-direction: column; }

.drow { display: flex; align-items: center; justify-content: flex-end; gap: 2px; height: 32px; margin-bottom: 4px; }
.dl { font-size: 15px; color: #333; white-space: nowrap; line-height: 18px; display: block; }
.drow .dl { margin-right: auto; }
.dl.low { padding-top: 12px; }
.btn { width: 32px; height: 32px; border: 1px solid #8a8a8a; background: #f0f0f0; display: flex; align-items: center; justify-content: center; flex: none; }
.btn svg { width: 24px; height: 24px; display: block; }
.btn.dis { border-color: #c8c8c8; }
.btn.dis svg { opacity: .3; }

.dsep { border: 0; height: 1px; background: #cfcfcf; margin: 0; flex: none; }
.first { margin-bottom: 3px; }
.offs { height: 25px; margin-bottom: 3px; gap: 3px; }
.num { width: 90px; height: 25px; background: #fff; border: 1px solid #8a8a8a; padding: 2px 3px 2px 4px; display: block; flex: none; }
.numv { display: block; height: 19px; background: #0078d7; color: #fff; text-align: right; line-height: 19px; font-size: 15.5px; letter-spacing: .8px; padding-right: 1px; }
.lock { width: 23px; height: 24px; border: 1px solid #8a8a8a; display: flex; align-items: center; justify-content: center; flex: none; }
.lock svg { width: 16px; height: 18px; }
.offs + .dsep { margin-bottom: 3px; }
.mat { margin-bottom: 2px; }
.tight { margin-bottom: 7px; }
.chk { height: 16px; margin-left: 2px; display: flex; align-items: center; gap: 4px; flex: none; }
.box { width: 16px; height: 16px; background: #0f6cbd; border-radius: 2px; display: block; flex: none; }
.box svg { width: 16px; height: 16px; display: block; }
.lblrow { margin-top: 10px; height: 16px; line-height: 16px; flex: none; }
.inp { height: 26px; margin-top: 6px; flex: none; background: #fff; border: 1px solid #8a8a8a; padding-left: 4px; font-size: 15.6px; line-height: 24px; color: #333; }
.sv { margin: 2px 0 2px; }
.inp.second { margin-top: 0; }
.tri { width: 0; height: 0; margin: 11px auto 5px; border-left: 6px solid transparent; border-right: 6px solid transparent; border-bottom: 6px solid #222; flex: none; }
.wide { margin: 0 -5px; }
.acts { margin-top: 8px; padding-right: 5px; display: flex; justify-content: flex-end; gap: 5px; }
.ok, .cancel { width: 60px; height: 28px; text-align: center; line-height: 27px; font-size: 15px; display: block; }
.ok { background: #00628c; color: #fff; }
.cancel { border: 1px solid #00628c; color: #00628c; }

.redbox { position: absolute; left: 479px; top: 226px; width: 159px; height: 46px; border: 3px solid #e23c40; z-index: 6; }
```
